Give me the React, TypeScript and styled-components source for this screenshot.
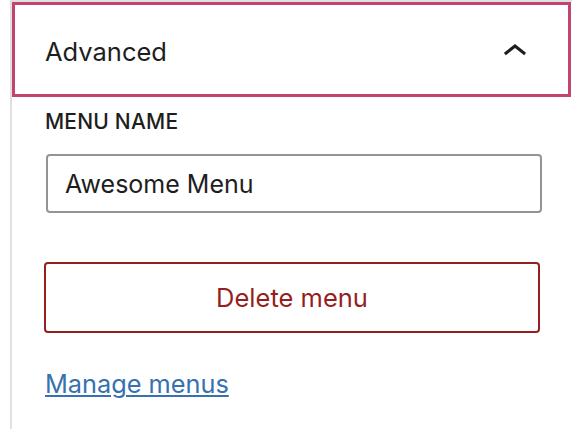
import React from "react";
import styled, { createGlobalStyle } from "styled-components";

const GlobalStyle = createGlobalStyle`
  html, body {
    margin: 0;
    padding: 0;
    background: #ffffff;
  }
  body {
    font-family: Inter, "Liberation Sans", sans-serif;
    color: #1e1e1e;
  }
`;

const Page = styled.div`
  padding-left: 10px;
  height: 429px;
  box-sizing: border-box;
  display: flex;
`;

const Sidebar = styled.aside`
  flex: 1;
  border-left: 2px solid #e0e0e0;
  border-top: 2px solid #e0e0e0;
  display: flex;
  flex-direction: column;
  padding-right: 1px;
`;

const PanelToggle = styled.button`
  height: 95px;
  display: flex;
  align-items: center;
  justify-content: space-between;
  padding: 4px 32px 0 33px;
  border: none;
  background: #ffffff;
  box-shadow: inset 0 0 0 3px #c3446f;
  font-family: Inter, "Liberation Sans", sans-serif;
  font-size: 25.5px;
  font-weight: 400;
  color: #1e1e1e;
  cursor: pointer;
  text-align: left;
`;

const Chevron = styled.svg`
  width: 48px;
  height: 48px;
  fill: #1e1e1e;
`;

const PanelBody = styled.div`
  display: flex;
  flex-direction: column;
  padding: 13px 0 0 32px;
  width: 498px;
`;

const Label = styled.label`
  font-size: 21px;
  font-weight: 500;
  line-height: 24px;
  text-transform: uppercase;
  margin-left: 1px;
  letter-spacing: 0.2px;
`;

const TextInput = styled.input`
  margin: 20px 0 0 2px;
  height: 59px;
  box-sizing: border-box;
  border: 2px solid #949494;
  border-radius: 4px;
  padding: 0 17px;
  font-family: Inter, "Liberation Sans", sans-serif;
  font-size: 25px;
  color: #1e1e1e;
  outline: none;
`;

const DangerButton = styled.button`
  margin-top: 49px;
  height: 71px;
  width: 496px;
  box-sizing: border-box;
  border: 2px solid #941f1f;
  border-radius: 4px;
  background: #ffffff;
  color: #941f1f;
  font-family: Inter, "Liberation Sans", sans-serif;
  font-size: 25.5px;
  cursor: pointer;
`;

const ManageLink = styled.a`
  margin-top: 36px;
  margin-left: 1px;
  align-self: flex-start;
  line-height: 30px;
  font-size: 25.3px;
  color: #3871b0;
  text-decoration: underline;
  text-underline-offset: 2px;
  text-decoration-thickness: 2px;
`;

export default function App() {
  return (
    <>
      <GlobalStyle />
      <Page>
        <Sidebar>
          <PanelToggle aria-expanded="true">
            <span>Advanced</span>
            <Chevron viewBox="0 0 24 24" aria-hidden="true">
              <path d="M6.5 12.4L12 8l5.5 4.4-.9 1.2L12 10l-4.6 3.6-1-1.2z" />
            </Chevron>
          </PanelToggle>
          <PanelBody>
            <Label htmlFor="menu-name">Menu name</Label>
            <TextInput id="menu-name" defaultValue="Awesome Menu" />
            <DangerButton>Delete menu</DangerButton>
            <ManageLink href="#">Manage menus</ManageLink>
          </PanelBody>
        </Sidebar>
      </Page>
    </>
  );
}
